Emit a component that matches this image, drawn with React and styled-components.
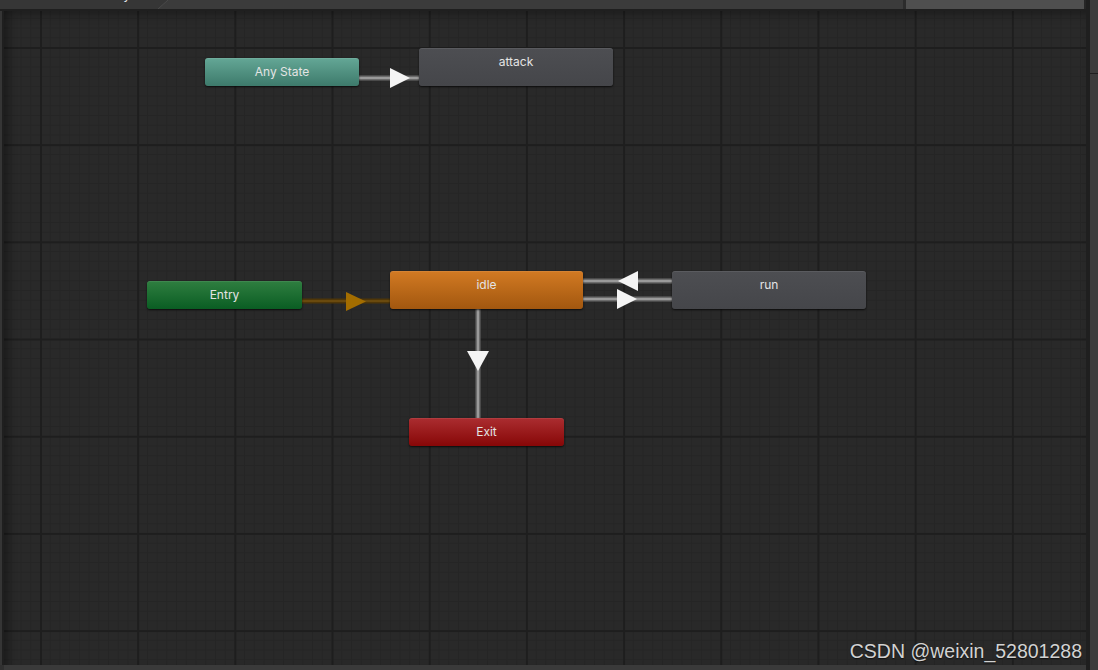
import React from 'react';
import styled, { createGlobalStyle, css } from 'styled-components';

const Global = createGlobalStyle`
  html, body { margin: 0; padding: 0; background: #2a2a2a; }
  body { font-family: Inter, "Liberation Sans", sans-serif; }
`;

const CANVAS_X = 4;
const CANVAS_Y = 11;

const Window = styled.div`
  width: 1098px;
  height: 670px;
  display: flex;
  overflow: hidden;
  background: #2a2a2a;
`;

const Main = styled.div`
  flex: 1;
  display: flex;
  flex-direction: column;
  min-width: 0;
`;

const Header = styled.div`
  flex: none;
  height: 9px;
  display: flex;
  background: #3b3b3b;
  border-bottom: 2px solid #1f1f1f;
  overflow: hidden;
`;

const Breadcrumb = styled.div`
  flex: none;
  width: 158px;
  background: #363636;
  overflow: hidden;
  color: #e6e6e6;
  font-family: "Liberation Sans", sans-serif;
  font-size: 12px;
  line-height: 14px;
`;

const CrumbText = styled.div`
  margin-top: -12px;
  padding-left: 80px;
  white-space: nowrap;
`;

const CrumbEdge = styled.svg`
  flex: none;
  width: 11px;
  height: 9px;
  display: block;
`;

const HeaderFill = styled.div`
  flex: 1;
`;

const HeaderBox = styled.div`
  flex: none;
  width: 178px;
  background: #4f4f4f;
  border-left: 3px solid #2c2c2c;
  border-right: 2px solid #262626;
`;

const Body = styled.div`
  flex: 1;
  display: flex;
  min-height: 0;
`;

const LeftRail = styled.div`
  flex: none;
  width: 4px;
  background: linear-gradient(to right, #353535 0 2px, #1f1f1f 2px 4px);
`;

const Canvas = styled.div`
  flex: 1;
  position: relative;
  overflow: hidden;
  background-color: #292929;
  background-image:
    linear-gradient(to right, #1e1e1e 2px, transparent 2px),
    linear-gradient(to bottom, #1e1e1e 2px, transparent 2px),
    linear-gradient(to right, #252525 1px, transparent 1px),
    linear-gradient(to bottom, #252525 1px, transparent 1px);
  background-size: 97.2px 97.2px, 97.2px 97.2px, 9.72px 9.72px, 9.72px 9.72px;
  background-position: 36px 36px, 36px 36px, 36px 36px, 36px 36px;
  box-shadow: inset 10px 0 10px -6px rgba(0, 0, 0, 0.35), inset 0 10px 10px -6px rgba(0, 0, 0, 0.25);
`;

const Footer = styled.div`
  flex: none;
  height: 5px;
  display: flex;
`;

const FooterCorner = styled.div`
  flex: none;
  width: 4px;
  background: #303030;
`;

const FooterBar = styled.div`
  flex: 1;
  background: #3a3a3a;
`;

const RightGutter = styled.div`
  flex: none;
  width: 4px;
  background: #1f1f1f;
`;

const RightRail = styled.div`
  flex: none;
  width: 8px;
  background: #3c3c3c;
  display: flex;
  flex-direction: column;
`;

const RailThumb = styled.div`
  flex: none;
  height: 73px;
  border-bottom: 1px solid #1f1f1f;
`;

const Transitions = styled.svg`
  position: absolute;
  left: 0;
  top: 0;
  width: 100%;
  height: 100%;
  overflow: visible;
`;

const kinds = {
  any: css`background: linear-gradient(to bottom, #64a796, #3d7a6b);`,
  entry: css`background: linear-gradient(to bottom, #2f7e40, #0a5d23);`,
  exit: css`background: linear-gradient(to bottom, #ab2d30, #870707);`,
  state: css`background: linear-gradient(to bottom, #4d4e52, #45464a);`,
  default: css`background: linear-gradient(to bottom, #d27a23, #a2570f);`,
};

const Node = styled.div`
  position: absolute;
  box-sizing: border-box;
  border-radius: 3px;
  color: #e4e4e4;
  font-size: 12px;
  line-height: 28px;
  text-align: center;
  white-space: nowrap;
  box-shadow: 0 1px 2px rgba(0, 0, 0, 0.7), inset 0 1px 0 rgba(255, 255, 255, 0.08);
  ${p => kinds[p.$kind]}
`;

const Watermark = styled.div`
  position: absolute;
  right: 4px;
  bottom: 4px;
  font-family: "Liberation Sans", Arial, sans-serif;
  font-size: 19.5px;
  line-height: 20px;
  color: #d2d2d2;
  text-shadow: 0 1px 1px rgba(0, 0, 0, 0.6);
  white-space: nowrap;
`;

const nodes = [
  { label: 'Any State', kind: 'any', x: 205, y: 58, w: 154, h: 28 },
  { label: 'attack', kind: 'state', x: 419, y: 48, w: 194, h: 38 },
  { label: 'Entry', kind: 'entry', x: 147, y: 281, w: 155, h: 28 },
  { label: 'idle', kind: 'default', x: 390, y: 271, w: 193, h: 38 },
  { label: 'run', kind: 'state', x: 672, y: 271, w: 194, h: 38 },
  { label: 'Exit', kind: 'exit', x: 409, y: 418, w: 155, h: 28 },
];

const Line = ({ x1, y1, x2, y2, outer = '#6c6c6c', inner = '#9a9a9a' }) => (
  <g>
    <line x1={x1} y1={y1} x2={x2} y2={y2} stroke={outer} strokeWidth="5" />
    <line x1={x1} y1={y1} x2={x2} y2={y2} stroke={inner} strokeWidth="2" />
  </g>
);

export default function App() {
  return (
    <>
      <Global />
      <Window>
        <Main>
          <Header>
            <Breadcrumb>
              <CrumbText>Base Layer</CrumbText>
            </Breadcrumb>
            <CrumbEdge viewBox="0 0 11 9">
              <polygon points="0,0 10,0 0,9" fill="#363636" />
              <line x1="0" y1="9" x2="10" y2="0" stroke="#4a4a4a" strokeWidth="1" />
            </CrumbEdge>
            <HeaderFill />
            <HeaderBox />
          </Header>
          <Body>
            <LeftRail />
            <Canvas>
              <Transitions viewBox={`${CANVAS_X} ${CANVAS_Y} 1082 654`} preserveAspectRatio="xMinYMin meet">
                <Line x1={359} y1={78} x2={419} y2={78} />
                <polygon points="390,68 410,78 390,88" fill="#f4f4f4" />

                <Line x1={302} y1={301} x2={390} y2={301} outer="#4f3608" inner="#6a4a0e" />
                <polygon points="346,292 366,301.5 346,311" fill="#a36d00" />

                <Line x1={583} y1={281} x2={672} y2={281} />
                <polygon points="638,271 618,281 638,291" fill="#f4f4f4" />

                <Line x1={583} y1={299} x2={672} y2={299} />
                <polygon points="617,289 637,299 617,309" fill="#f4f4f4" />

                <Line x1={478} y1={309} x2={478} y2={418} />
                <polygon points="467,351 489,351 478,371" fill="#f4f4f4" />
              </Transitions>
              {nodes.map(n => (
                <Node
                  key={n.label}
                  $kind={n.kind}
                  style={{ left: n.x - CANVAS_X, top: n.y - CANVAS_Y, width: n.w, height: n.h }}
                >
                  {n.label}
                </Node>
              ))}
              <Watermark>CSDN @weixin_52801288</Watermark>
            </Canvas>
          </Body>
          <Footer>
            <FooterCorner />
            <FooterBar />
          </Footer>
        </Main>
        <RightGutter />
        <RightRail>
          <RailThumb />
        </RightRail>
      </Window>
    </>
  );
}
